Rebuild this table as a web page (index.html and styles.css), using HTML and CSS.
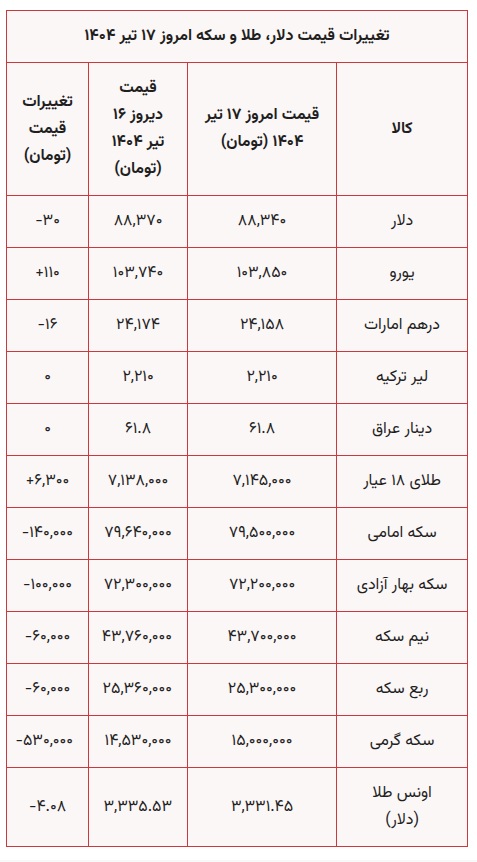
FILE: index.html
```html
<!DOCTYPE html>
<html lang="fa" dir="rtl">
<head>
<meta charset="utf-8">
<link rel="stylesheet" href="styles.css">
</head>
<body>
<div class="wrap">
<table class="prices">
<colgroup>
<col class="c-name"><col class="c-today"><col class="c-yest"><col class="c-diff">
</colgroup>
<thead>
<tr><th colspan="4" class="title">تغییرات قیمت دلار، طلا و سکه امروز ۱۷ تیر ۱۴۰۴</th></tr>
<tr>
<th>کالا</th>
<th>قیمت امروز ۱۷ تیر ۱۴۰۴ (تومان)</th>
<th>قیمت دیروز ۱۶ تیر ۱۴۰۴ (تومان)</th>
<th>تغییرات قیمت (تومان)</th>
</tr>
</thead>
<tbody>
<tr><td>دلار</td><td>۸۸,۳۴۰</td><td>۸۸,۳۷۰</td><td>۳۰-</td></tr>
<tr><td>یورو</td><td>۱۰۳,۸۵۰</td><td>۱۰۳,۷۴۰</td><td>۱۱۰+</td></tr>
<tr><td>درهم امارات</td><td>۲۴,۱۵۸</td><td>۲۴,۱۷۴</td><td>۱۶-</td></tr>
<tr><td>لیر ترکیه</td><td>۲,۲۱۰</td><td>۲,۲۱۰</td><td>۰</td></tr>
<tr><td>دینار عراق</td><td>۶۱.۸</td><td>۶۱.۸</td><td>۰</td></tr>
<tr><td>طلای ۱۸ عیار</td><td>۷,۱۴۵,۰۰۰</td><td>۷,۱۳۸,۰۰۰</td><td>۶,۳۰۰+</td></tr>
<tr><td>سکه امامی</td><td>۷۹,۵۰۰,۰۰۰</td><td>۷۹,۶۴۰,۰۰۰</td><td>۱۴۰,۰۰۰-</td></tr>
<tr><td>سکه بهار آزادی</td><td>۷۲,۲۰۰,۰۰۰</td><td>۷۲,۳۰۰,۰۰۰</td><td>۱۰۰,۰۰۰-</td></tr>
<tr><td>نیم سکه</td><td>۴۳,۷۰۰,۰۰۰</td><td>۴۳,۷۶۰,۰۰۰</td><td>۶۰,۰۰۰-</td></tr>
<tr><td>ربع سکه</td><td>۲۵,۳۰۰,۰۰۰</td><td>۲۵,۳۶۰,۰۰۰</td><td>۶۰,۰۰۰-</td></tr>
<tr><td>سکه گرمی</td><td>۱۵,۰۰۰,۰۰۰</td><td>۱۴,۵۳۰,۰۰۰</td><td>۵۳۰,۰۰۰-</td></tr>
<tr><td>اونس طلا<br>(دلار)</td><td>۳,۳۳۱.۴۵</td><td>۳,۳۳۵.۵۳</td><td>۴.۰۸-</td></tr>
</tbody>
</table>
</div>
<div class="band"></div>
</body>
</html>
```
FILE: styles.css
```css
html, body {
  margin: 0;
  padding: 0;
  background: #ffffff;
}
body {
  font-family: "Vazirmatn", "Vazir", "DejaVu Sans", sans-serif;
  color: #1f1f1f;
}
.wrap {
  padding: 10px 10px 0 6px;
  direction: ltr;
}
.prices {
  direction: rtl;
  width: 462px;
  table-layout: fixed;
  border-collapse: collapse;
  background: #fcf7f7;
  border: 1px solid #c9393d;
}
.c-name { width: 131px; }
.c-today { width: 149px; }
.c-yest { width: 99px; }
.c-diff { width: 82px; }
.prices th, .prices td {
  border: 1px solid #c9393d;
  padding: 12px 15px;
  line-height: 27px;
  font-size: 16px;
  text-align: center;
  vertical-align: middle;
}
.prices th {
  font-weight: bold;
}
.prices td {
  font-weight: normal;
}
.band {
  margin-top: 13px;
  height: 10px;
  background: #f8f8f8;
}
```
